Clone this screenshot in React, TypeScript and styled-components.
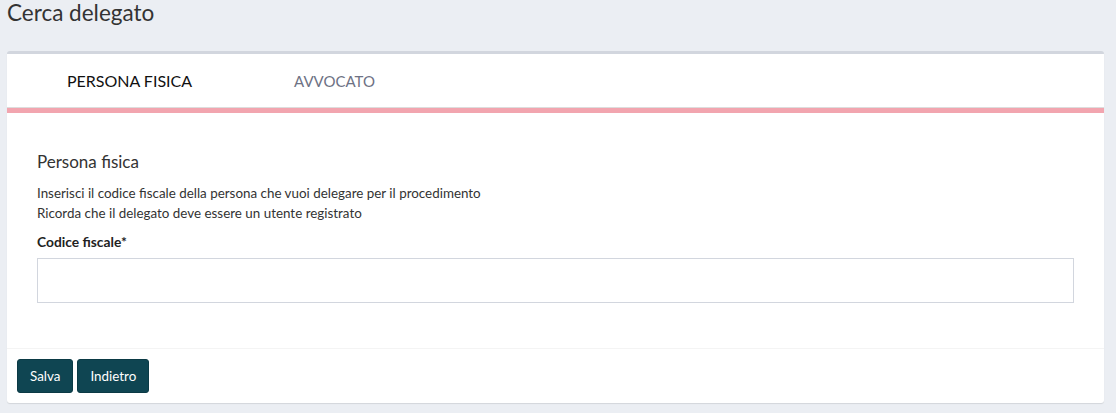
import React from "react";
import styled, { createGlobalStyle } from "styled-components";

const Global = createGlobalStyle`
  html, body { margin: 0; padding: 0; background: #ebeef3; }
  body { font-family: "Source Sans Pro", Lato, "Open Sans", sans-serif; color: #333; }
  * { box-sizing: border-box; }
`;

const Page = styled.div`
  padding: 0 12px 10px 7px;
`;

const Title = styled.h1`
  margin: 0;
  height: 51px;
  padding-top: 0;
  font-size: 22.5px;
  font-weight: 400;
  line-height: 26px;
  color: #333;
`;

const Card = styled.div`
  background: #fff;
  border-top: 3px solid #d2d6de;
  border-radius: 3px;
  box-shadow: 0 1px 1px rgba(0, 0, 0, 0.1);
`;

const TabBar = styled.div`
  display: flex;
  height: 54px;
  padding-left: 20px;
  border-bottom: 1px solid #ddd;
`;

const Tab = styled.div<{ $active?: boolean }>`
  width: 205px;
  display: flex;
  align-items: center;
  justify-content: center;
  font-size: ${(p) => (p.$active ? "16px" : "15px")};
  color: ${(p) => (p.$active ? "#111" : "#6e7284")};
`;

const Accent = styled.div`
  height: 5px;
  background: #f2a5af;
`;

const Body = styled.div`
  padding: 38px 30px 45px 30px;
  border-bottom: 1px solid #f4f4f4;
`;

const Heading = styled.h3`
  margin: 0 0 10px;
  font-size: 17px;
  font-weight: 400;
  line-height: 22px;
  color: #333;
`;

const Text = styled.p`
  margin: 0;
  font-size: 13.4px;
  line-height: 20px;
  color: #333;
`;

const Label = styled.label`
  display: block;
  margin: 9px 0 6px;
  font-size: 13.8px;
  font-weight: 700;
  line-height: 20px;
  color: #222;
`;

const Input = styled.input`
  display: block;
  width: 100%;
  height: 45px;
  border: 1px solid #d2d6de;
  border-radius: 0;
  padding: 6px 12px;
  font-size: 14px;
  font-family: inherit;
  outline: none;
`;

const Footer = styled.div`
  display: flex;
  gap: 4px;
  padding: 10px;
`;

const Button = styled.button`
  height: 34px;
  padding: 0 12px;
  border: 1px solid #0b3a45;
  border-radius: 3px;
  background: #0f4552;
  color: #fff;
  font-family: inherit;
  font-size: 13.4px;
`;

export default function App() {
  return (
    <Page>
      <Global />
      <Title>Cerca delegato</Title>
      <Card>
        <TabBar>
          <Tab $active>PERSONA FISICA</Tab>
          <Tab>AVVOCATO</Tab>
        </TabBar>
        <Accent />
        <Body>
          <Heading>Persona fisica</Heading>
          <Text>Inserisci il codice fiscale della persona che vuoi delegare per il procedimento</Text>
          <Text>Ricorda che il delegato deve essere un utente registrato</Text>
          <Label>Codice fiscale*</Label>
          <Input type="text" />
        </Body>
        <Footer>
          <Button>Salva</Button>
          <Button>Indietro</Button>
        </Footer>
      </Card>
    </Page>
  );
}
